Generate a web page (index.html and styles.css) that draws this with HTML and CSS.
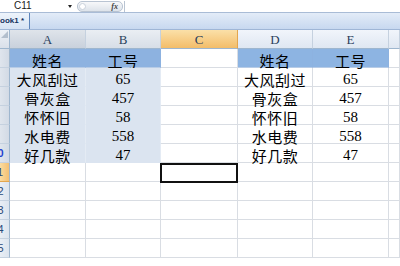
FILE: index.html
```html
<!DOCTYPE html>
<html lang="zh">
<head>
    <meta charset="UTF-8">
    <title>Book1</title>
    <link rel="stylesheet" href="styles.css">
</head>
<body>
    <div class="formula-bar">
        <div class="name-box">C11</div>
        <div class="name-arrow"></div>
        <div class="fx-pill">
            <span class="knob"></span>
            <span class="fx">fx</span>
        </div>
        <div class="formula-input"></div>
    </div>
    <div class="book-tabs">
        <div class="tab">ook1 *</div>
    </div>

    <div class="sheet">
        <!-- column headers -->
        <div class="corner"><span class="tri"></span></div>
        <div class="col-head sel">A</div>
        <div class="col-head sel light">B</div>
        <div class="col-head active">C</div>
        <div class="col-head">D</div>
        <div class="col-head">E</div>
        <div class="col-head"></div>

        <!-- row 5 -->
        <div class="row-head sel"></div>
        <div class="cell hdr">姓名</div>
        <div class="cell hdr">工号</div>
        <div class="cell"></div>
        <div class="cell hdr plain">姓名</div>
        <div class="cell hdr plain">工号</div>
        <div class="cell"></div>

        <div class="row-head sel"></div>
        <div class="cell picked">大风刮过</div>
        <div class="cell picked num">65</div>
        <div class="cell"></div>
        <div class="cell">大风刮过</div>
        <div class="cell num">65</div>
        <div class="cell"></div>

        <div class="row-head sel"></div>
        <div class="cell picked">骨灰盒</div>
        <div class="cell picked num">457</div>
        <div class="cell"></div>
        <div class="cell">骨灰盒</div>
        <div class="cell num">457</div>
        <div class="cell"></div>

        <div class="row-head sel"></div>
        <div class="cell picked">怀怀旧</div>
        <div class="cell picked num">58</div>
        <div class="cell"></div>
        <div class="cell">怀怀旧</div>
        <div class="cell num">58</div>
        <div class="cell"></div>

        <div class="row-head sel"></div>
        <div class="cell picked">水电费</div>
        <div class="cell picked num">558</div>
        <div class="cell"></div>
        <div class="cell">水电费</div>
        <div class="cell num">558</div>
        <div class="cell"></div>

        <div class="row-head sel"><span class="blue">10</span></div>
        <div class="cell picked">好几款</div>
        <div class="cell picked num">47</div>
        <div class="cell"></div>
        <div class="cell">好几款</div>
        <div class="cell num">47</div>
        <div class="cell"></div>

        <div class="row-head active"><span>11</span></div>
        <div class="cell"></div>
        <div class="cell"></div>
        <div class="cell current"></div>
        <div class="cell"></div>
        <div class="cell"></div>
        <div class="cell"></div>

        <div class="row-head"><span>12</span></div>
        <div class="cell"></div><div class="cell"></div><div class="cell"></div>
        <div class="cell"></div><div class="cell"></div><div class="cell"></div>

        <div class="row-head"><span>13</span></div>
        <div class="cell"></div><div class="cell"></div><div class="cell"></div>
        <div class="cell"></div><div class="cell"></div><div class="cell"></div>

        <div class="row-head"><span>14</span></div>
        <div class="cell"></div><div class="cell"></div><div class="cell"></div>
        <div class="cell"></div><div class="cell"></div><div class="cell"></div>

        <div class="row-head"><span>15</span></div>
        <div class="cell"></div><div class="cell"></div><div class="cell"></div>
        <div class="cell"></div><div class="cell"></div><div class="cell"></div>
    </div>
</body>
</html>
```

FILE: styles.css
```css
html, body {
    margin: 0;
    padding: 0;
    overflow: hidden;
    background-color: #ffffff;
}

body {
    width: 400px;
    height: 266px;
    font-family: "Liberation Sans", Arial, sans-serif;
}

/* 数式バー */
.formula-bar {
    display: flex;
    align-items: center;
    height: 12px;
    background-color: #ffffff;
    border-bottom: 1px solid #a9bcd6;
}

.name-box {
    width: 54px;
    padding-left: 14px;
    font-size: 10px;
    line-height: 12px;
    color: #1a1a1a;
}

.name-arrow {
    width: 0;
    height: 0;
    border-left: 2px solid transparent;
    border-right: 2px solid transparent;
    border-top: 3px solid #222222;
    margin-right: 5px;
}

.fx-pill {
    position: relative;
    width: 44px;
    height: 9px;
    border: 1px solid #b9c4d2;
    border-radius: 5px;
    background: linear-gradient(#f7f8fa, #dde3ea);
    display: flex;
    align-items: center;
    justify-content: flex-end;
}

.fx-pill .knob {
    position: absolute;
    left: 1px;
    top: 1px;
    width: 7px;
    height: 7px;
    border-radius: 50%;
    background: #ffffff;
    border: 1px solid #c9d1db;
    box-sizing: border-box;
}

.fx {
    font-family: "Liberation Serif", serif;
    font-style: italic;
    font-weight: bold;
    font-size: 8px;
    color: #444444;
    padding-right: 4px;
}

.formula-input {
    flex: 1;
    height: 11px;
    margin-left: 1px;
    border-left: 1px solid #b9c4d2;
    background: #ffffff;
}

/* ブックのタブ */
.book-tabs {
    display: flex;
    height: 16px;
    background: linear-gradient(#e3ecf8, #c7d8ef);
    border-bottom: 1px solid #9fb6d6;
}

.tab {
    width: 29px;
    margin-left: -6px;
    padding-left: 6px;
    font-size: 8px;
    font-weight: bold;
    line-height: 16px;
    color: #15325e;
    background: linear-gradient(#eef4fb, #d6e3f4);
    border-right: 1px solid #5d85ba;
    overflow: hidden;
    white-space: nowrap;
}

/* シート */
.sheet {
    display: grid;
    grid-template-columns: 10px 76px 75px 77px 75px 76px 1fr;
    grid-template-rows: 19px repeat(11, 19px);
}

.corner,
.col-head,
.row-head,
.cell {
    box-sizing: border-box;
}

.corner {
    position: relative;
    background: linear-gradient(#eef2f7, #d9e0ea);
    border-right: 1px solid #9eb6ce;
    border-bottom: 1px solid #9eb6ce;
}

.corner .tri {
    position: absolute;
    right: 1px;
    top: 1px;
    width: 0;
    height: 0;
    border-left: 7px solid transparent;
    border-bottom: 7px solid #b3bfcd;
}

.col-head {
    background: linear-gradient(#f1f5fb, #dfe7f2);
    border-right: 1px solid #c5d1df;
    border-bottom: 1px solid #9eb6ce;
    font-family: "Liberation Serif", serif;
    font-size: 13px;
    line-height: 20px;
    text-align: center;
    color: #2a3f5c;
}

.col-head.sel {
    background: linear-gradient(#dfe4ea, #c9d1dc);
}

.col-head.sel.light {
    background: linear-gradient(#eaeef3, #d7dee7);
}

.col-head.active {
    background: linear-gradient(#fbe0a8, #f3bd69);
    border-right-color: #e3a64e;
}

.row-head {
    overflow: hidden;
    background: linear-gradient(90deg, #e9eef5, #dce4ee);
    border-right: 1px solid #9eb6ce;
    border-bottom: 1px solid #c5d1df;
    font-size: 11px;
    line-height: 19px;
    color: #2b4a78;
}

.row-head span {
    display: block;
    width: 25px;
    margin-left: -15px;
    text-align: center;
}

.row-head.sel {
    background: linear-gradient(90deg, #dfe5ed, #d2dae5);
}

.row-head .blue {
    color: #1f3fd0;
    font-weight: bold;
}

.row-head.active {
    background: linear-gradient(90deg, #fbdca0, #f3c074);
    border-bottom-color: #e3a64e;
}

.cell {
    border-right: 1px solid #d9dde3;
    border-bottom: 1px solid #d9dde3;
    font-family: "Noto Sans CJK SC", "Noto Sans CJK JP", sans-serif;
    font-size: 15px;
    line-height: 17px;
    padding-top: 3px;
    text-align: center;
    color: #000000;
    white-space: nowrap;
    letter-spacing: 0.5px;
}

.cell.num {
    font-family: "Liberation Serif", serif;
    font-size: 15px;
    letter-spacing: 0;
}

.cell.hdr {
    background-color: #8db2e0;
    border-right-color: #8db2e0;
    border-bottom-color: #b8cce6;
}

.cell.hdr.plain {
    background-color: #8db4e2;
}

.cell.picked {
    background-color: #dbe4f0;
    border-right-color: #e4ebf4;
    border-bottom-color: #dbe4f0;
}

.cell.current {
    position: relative;
}

.cell.current::after {
    content: "";
    position: absolute;
    left: -1px;
    top: 0;
    right: -1px;
    bottom: -2px;
    border: 2px solid #111111;
}
```
